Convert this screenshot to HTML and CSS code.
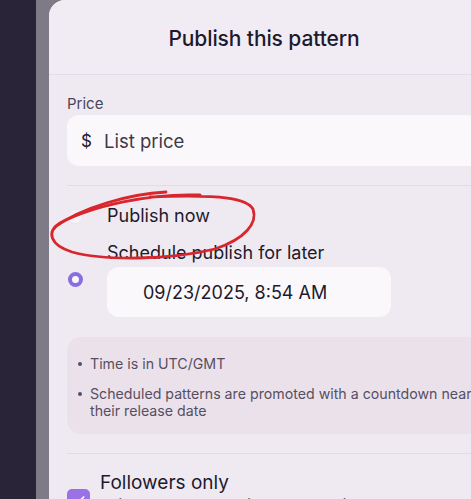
FILE: index.html
```html
<!DOCTYPE html>
<html lang="en">
<head>
<meta charset="utf-8">
<title>Publish this pattern</title>
<link rel="stylesheet" href="styles.css">
</head>
<body>
<div class="app">
  <div class="sidebar"></div>
  <div class="backdrop">
    <div class="modal">
      <div class="modal-header">
        <h1 class="title">Publish this pattern</h1>
      </div>
      <div class="modal-body">
        <div class="field">
          <label class="field-label">Price</label>
          <div class="input price-input">
            <span class="currency">$</span>
            <span class="placeholder">List price</span>
          </div>
        </div>
        <hr class="divider">
        <div class="options">
          <div class="option">
            <span class="radio"></span>
            <div class="option-main">
              <span class="option-label">Publish now</span>
            </div>
          </div>
          <div class="option">
            <span class="radio checked"></span>
            <div class="option-main">
              <span class="option-label">Schedule publish for later</span>
              <div class="input date-input">09/23/2025, 8:54 AM</div>
            </div>
          </div>
        </div>
        <div class="info">
          <ul class="info-list">
            <li>Time is in UTC/GMT</li>
            <li>Scheduled patterns are promoted with a countdown near their release date</li>
          </ul>
        </div>
        <hr class="divider">
        <div class="toggle-row">
          <span class="checkbox">
            <svg viewBox="0 0 24 24" width="16" height="16"><path d="M5 12.5l4.5 4.5L19 7.5" fill="none" stroke="#fff" stroke-width="2.6" stroke-linecap="round" stroke-linejoin="round"/></svg>
          </span>
          <div class="toggle-text">
            <span class="toggle-title">Followers only</span>
            <span class="toggle-desc">This toggle makes this pattern available only to your followers</span>
          </div>
        </div>
      </div>
    </div>
  </div>
</div>
<svg class="annotation" width="471" height="499" viewBox="0 0 471 499">
  <path d="M166 192 C 130 194, 82 207, 55 227" fill="none" stroke="#d8262c" stroke-width="2.8" stroke-linecap="round"/>
  <path d="M200 195 C 150 193, 92 206, 60 223 C 46 232, 50 245, 72 252 C 105 261, 170 260, 215 249 C 245 239, 258 223, 253 209 C 247 199, 225 194, 150 197" fill="none" stroke="#d8262c" stroke-width="2.8" stroke-linecap="round"/>
</svg>
</body>
</html>
```

FILE: styles.css
```css
html, body {
  margin: 0;
  padding: 0;
}
body {
  background: #2a2438;
  width: 471px;
  height: 499px;
  overflow: hidden;
  position: relative;
  font-family: "Inter", "Liberation Sans", sans-serif;
}
.app {
  display: flex;
  height: 499px;
}
.sidebar {
  width: 36px;
  flex: none;
  background: #2a2438;
}
.backdrop {
  flex: none;
  width: 520px;
  background: #7f7b86;
  padding-left: 13px;
  box-sizing: border-box;
}
.modal {
  width: 470px;
  height: 520px;
  background: #efeaf2;
  border-top-left-radius: 16px;
  overflow: hidden;
}
.modal-header {
  height: 75px;
  box-sizing: border-box;
  border-bottom: 1px solid #e4dde8;
  background: #f1ecf4;
  display: flex;
  align-items: center;
  justify-content: center;
  padding-right: 40px;
}
.title {
  margin: 0;
  font-size: 21px;
  font-weight: 500;
  color: #1d1a2d;
  letter-spacing: -0.1px;
  padding-top: 2px;
}
.modal-body {
  padding: 20px 0 0 18px;
}
.field-label {
  display: block;
  font-size: 15px;
  line-height: 18px;
  color: #4b4557;
  margin-bottom: 2px;
}
.input {
  background: #fbf8fc;
  border-radius: 12px;
  box-sizing: border-box;
  display: flex;
  align-items: center;
  color: #2d2939;
}
.price-input {
  height: 51px;
  padding-left: 14px;
  font-size: 18.5px;
}
.currency {
  width: 23px;
  font-size: 17px;
  color: #1d1a2d;
}
.placeholder {
  color: #3e3949;
}
.divider {
  border: 0;
  border-top: 1.5px solid #e3dce7;
  margin: 19px 0 0 0;
}
.options {
  display: flex;
  flex-direction: column;
  gap: 15px;
  padding-top: 19px;
}
.option {
  display: flex;
  align-items: center;
}
.radio {
  width: 15px;
  height: 15px;
  border-radius: 50%;
  box-sizing: border-box;
  border: 1px solid #ece7ef;
  background: #f5f2f7;
  margin-left: 1px;
  margin-right: 24px;
  flex: none;
}
.radio.checked {
  border: 4px solid #8a6ee0;
  background: #fbf8fc;
}
.option-main {
  display: flex;
  flex-direction: column;
  gap: 3px;
}
.option-label {
  font-size: 18px;
  line-height: 22px;
  color: #1d1a2d;
}
.date-input {
  width: 284px;
  height: 50px;
  padding-left: 36px;
  font-size: 18px;
  color: #1d1a2d;
}
.info {
  margin-top: 20px;
  background: #ebe1eb;
  border-radius: 14px;
  padding: 18px 0 15px 11px;
}
.info-list {
  list-style: none;
  margin: 0;
  padding: 0;
  display: flex;
  flex-direction: column;
  gap: 13px;
}
.info-list li {
  position: relative;
  padding-left: 12px;
  font-size: 14.2px;
  line-height: 17px;
  color: #564f62;
  max-width: 388px;
}
.info-list li::before {
  content: "";
  position: absolute;
  left: 0;
  top: 7px;
  width: 4px;
  height: 4px;
  border-radius: 50%;
  background: #564f62;
}
.toggle-row {
  display: flex;
  align-items: center;
  gap: 10px;
  padding-top: 17px;
}
.checkbox {
  width: 23px;
  height: 23px;
  border-radius: 5px;
  background: #9a72e6;
  display: flex;
  align-items: center;
  justify-content: center;
  flex: none;
  margin-top: 14px;
}
.toggle-text {
  display: flex;
  flex-direction: column;
}
.toggle-title {
  font-size: 19px;
  line-height: 24px;
  color: #1d1a2d;
}
.toggle-desc {
  font-size: 15px;
  line-height: 20px;
  color: #6a6374;
  white-space: nowrap;
}
.annotation {
  position: absolute;
  left: 0;
  top: 0;
  pointer-events: none;
}
```
